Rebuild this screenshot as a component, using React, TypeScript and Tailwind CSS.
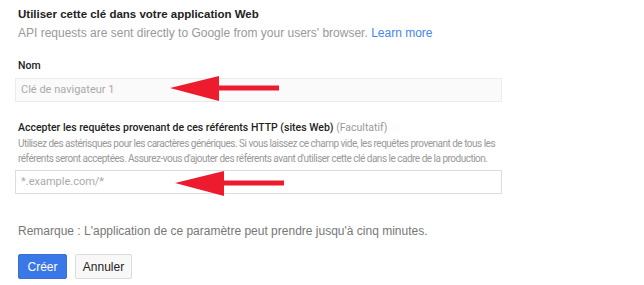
function Arrow({ className }: { className: string }) {
  return (
    <svg
      className={`absolute pointer-events-none ${className}`}
      width="110"
      height="25"
      viewBox="0 0 110 25"
    >
      <polygon points="0,12 49,0 49,9.5 109,9.5 109,14.5 49,14.5 49,25" fill="#ec1c2e" />
    </svg>
  );
}

export default function App() {
  const roboto = "font-['Roboto','Liberation_Sans',sans-serif]";
  const arial = "font-['Liberation_Sans','Arial',sans-serif]";

  return (
    <div className="w-[644px] h-[285px] bg-white overflow-hidden">
      <div className="pl-[18px] pt-[5px]">
        {/* Header */}
        <h1 className={`${arial} text-[11.5px] leading-[18px] font-bold text-[#222]`}>
          Utiliser cette clé dans votre application Web
        </h1>
        <p className={`${arial} text-[12px] leading-[18px] mt-[1px] text-[#999]`}>
          API requests are sent directly to Google from your users' browser.{" "}
          <span className="text-[#4285f4]">Learn more</span>
        </p>

        {/* Nom */}
        <label className={`${roboto} block mt-[17px] text-[10.5px] leading-[14px] font-medium text-[#222]`}>
          Nom
        </label>
        <div className="relative mt-[5px] -ml-[3px] w-[487px]">
          <div
            className={`${roboto} h-[24px] border border-[#ececec] bg-[#fafafa] pl-[5px] flex items-center text-[11px] text-[#aaa]`}
          >
            Clé de navigateur 1
          </div>
          <Arrow className="left-[155px] top-[-2px]" />
        </div>

        {/* Référents */}
        <label className={`${roboto} block mt-[19px] text-[10.5px] leading-[14px] font-medium text-[#222]`}>
          Accepter les requêtes provenant de ces référents HTTP (sites Web){" "}
          <span className="font-normal text-[#999]">(Facultatif)</span>
        </label>
        <p className={`${roboto} text-[10px] tracking-[-0.5px] leading-[15px] mt-[1px] text-[#999] w-[490px]`}>
          Utilisez des astérisques pour les caractères génériques. Si vous laissez ce champ vide, les requêtes
          provenant de tous les référents seront acceptées. Assurez-vous d'ajouter des référents avant d'utiliser
          cette clé dans le cadre de la production.
        </p>
        <div className="relative mt-[4px] -ml-[3px] w-[487px]">
          <div
            className={`${roboto} h-[24px] border border-[#dcdcdc] bg-white pl-[5px] flex items-center text-[11px] text-[#aaa]`}
          >
            *.example.com/*
          </div>
          <Arrow className="left-[160px] top-[1px]" />
        </div>

        {/* Remarque */}
        <p className={`${arial} mt-[28px] text-[12px] leading-[18px] text-[#777]`}>
          Remarque : L'application de ce paramètre peut prendre jusqu'à cinq minutes.
        </p>

        {/* Buttons */}
        <div className={`${arial} flex gap-[8px] mt-[14px]`}>
          <button className="h-[25px] w-[49px] rounded-[2px] bg-[#3b78e7] border border-[#3b6fd4] text-white text-[12px]">
            Créer
          </button>
          <button className="h-[25px] w-[57px] rounded-[2px] bg-[#f8f8f8] border border-[#dcdcdc] text-[#222] text-[12px]">
            Annuler
          </button>
        </div>
      </div>
    </div>
  );
}
